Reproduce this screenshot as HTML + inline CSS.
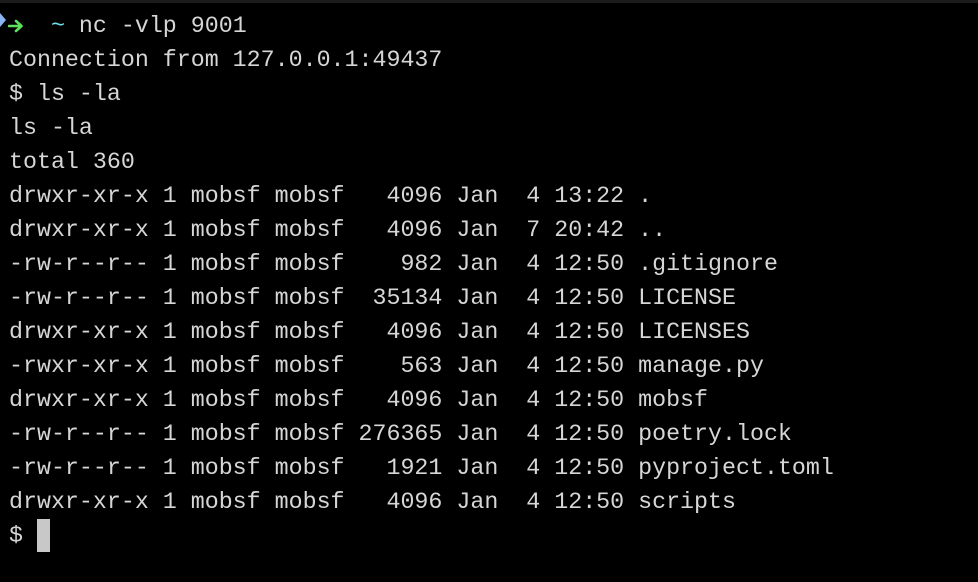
<!DOCTYPE html>
<html><head><meta charset="utf-8"><style>
html,body{margin:0;padding:0;background:#000;width:978px;height:582px;overflow:hidden}
.top{position:absolute;left:0;top:0;width:978px;height:3px;background:#1c1c1c}
pre{position:absolute;left:9px;top:9px;margin:0;font-family:"Liberation Mono",monospace;font-size:23.3px;line-height:34px;color:#d6d6d6;white-space:pre}
.c{color:#6ee0e8}
.cur{display:inline-block;width:13px;height:33px;background:#c8c8c8;vertical-align:top}
.mk{position:absolute;left:0;top:13px;width:0;height:0;border-top:7px solid transparent;border-bottom:7px solid transparent;border-left:6px solid #8cb4f0}
svg{position:absolute;left:8px;top:19px}
</style></head><body>
<div class="top"></div>
<div class="mk"></div>
<svg width="16" height="14" viewBox="0 0 16 14"><path d="M1 7H13M8 2L13.5 7L8 12" stroke="#5ee05e" stroke-width="2.6" fill="none" stroke-linecap="round" stroke-linejoin="round"/></svg>
<pre>   <span class="c">~</span> nc -vlp 9001
Connection from 127.0.0.1:49437
$ ls -la
ls -la
total 360
drwxr-xr-x 1 mobsf mobsf   4096 Jan  4 13:22 .
drwxr-xr-x 1 mobsf mobsf   4096 Jan  7 20:42 ..
-rw-r--r-- 1 mobsf mobsf    982 Jan  4 12:50 .gitignore
-rw-r--r-- 1 mobsf mobsf  35134 Jan  4 12:50 LICENSE
drwxr-xr-x 1 mobsf mobsf   4096 Jan  4 12:50 LICENSES
-rwxr-xr-x 1 mobsf mobsf    563 Jan  4 12:50 manage.py
drwxr-xr-x 1 mobsf mobsf   4096 Jan  4 12:50 mobsf
-rw-r--r-- 1 mobsf mobsf 276365 Jan  4 12:50 poetry.lock
-rw-r--r-- 1 mobsf mobsf   1921 Jan  4 12:50 pyproject.toml
drwxr-xr-x 1 mobsf mobsf   4096 Jan  4 12:50 scripts
$ <span class="cur"></span></pre>
</body></html>
